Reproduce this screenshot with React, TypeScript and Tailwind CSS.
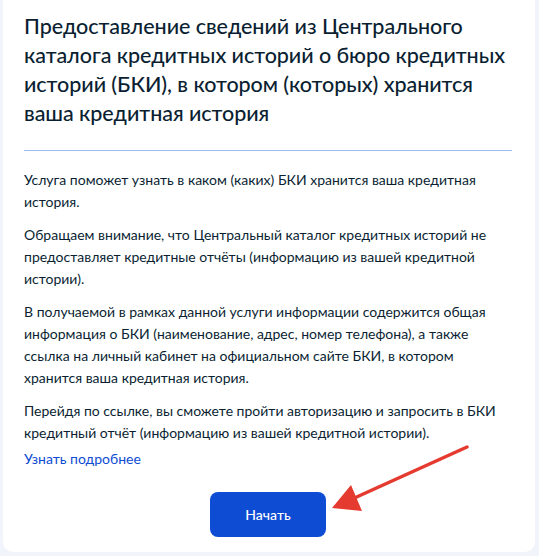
export default function App() {
  const paragraphs = [
    'Услуга поможет узнать в каком (каких) БКИ хранится ваша кредитная история.',
    'Обращаем внимание, что Центральный каталог кредитных историй не предоставляет кредитные отчёты (информацию из вашей кредитной истории).',
    'В получаемой в рамках данной услуги информации содержится общая информация о БКИ (наименование, адрес, номер телефона), а также ссылка на личный кабинет на официальном сайте БКИ, в котором хранится ваша кредитная история.',
    'Перейдя по ссылке, вы сможете пройти авторизацию и запросить в БКИ кредитный отчёт (информацию из вашей кредитной истории).',
  ]

  return (
    <div
      className="relative min-h-[556px] bg-[#f1f4fa] pl-[3px] pr-[4px] pb-[3px] text-[#0b1f33]"
      style={{ fontFamily: 'Lato, "Noto Sans", sans-serif' }}
    >
      <div className="bg-white rounded-b-[10px] pl-[21px] pr-[23px] pt-[12px] pb-[15px]">
        <h1 className="text-[21.5px] leading-[29px] font-medium tracking-[-0.05px]">
          Предоставление сведений из Центрального каталога кредитных историй о бюро кредитных историй (БКИ), в котором (которых) хранится ваша кредитная история
        </h1>

        <div className="mt-[22px] h-px bg-[#9dbaf0]" />

        <div className="mt-[18px] text-[14px] leading-[22px]">
          {paragraphs.map((text, i) => (
            <p key={i} className={i > 0 ? 'mt-[11px]' : ''}>
              {text}
            </p>
          ))}
          <a href="#" className="block mt-[4px] text-[#0d4cd3]">
            Узнать подробнее
          </a>
        </div>

        <div className="mt-[22px] flex justify-center">
          <button className="w-[116px] h-[45px] rounded-[8px] bg-[#0d4cd3] text-white text-[14px] font-medium">
            Начать
          </button>
        </div>
      </div>

      {/* red arrow pointing at the button */}
      <svg className="absolute left-0 top-0 pointer-events-none" width="539" height="556" viewBox="0 0 539 556">
        <line x1="467" y1="447" x2="350" y2="500" stroke="#e53a2f" strokeWidth="3.5" strokeLinecap="round" />
        <polygon points="332,508 351,485 362,511" fill="#e53a2f" />
      </svg>
    </div>
  )
}
